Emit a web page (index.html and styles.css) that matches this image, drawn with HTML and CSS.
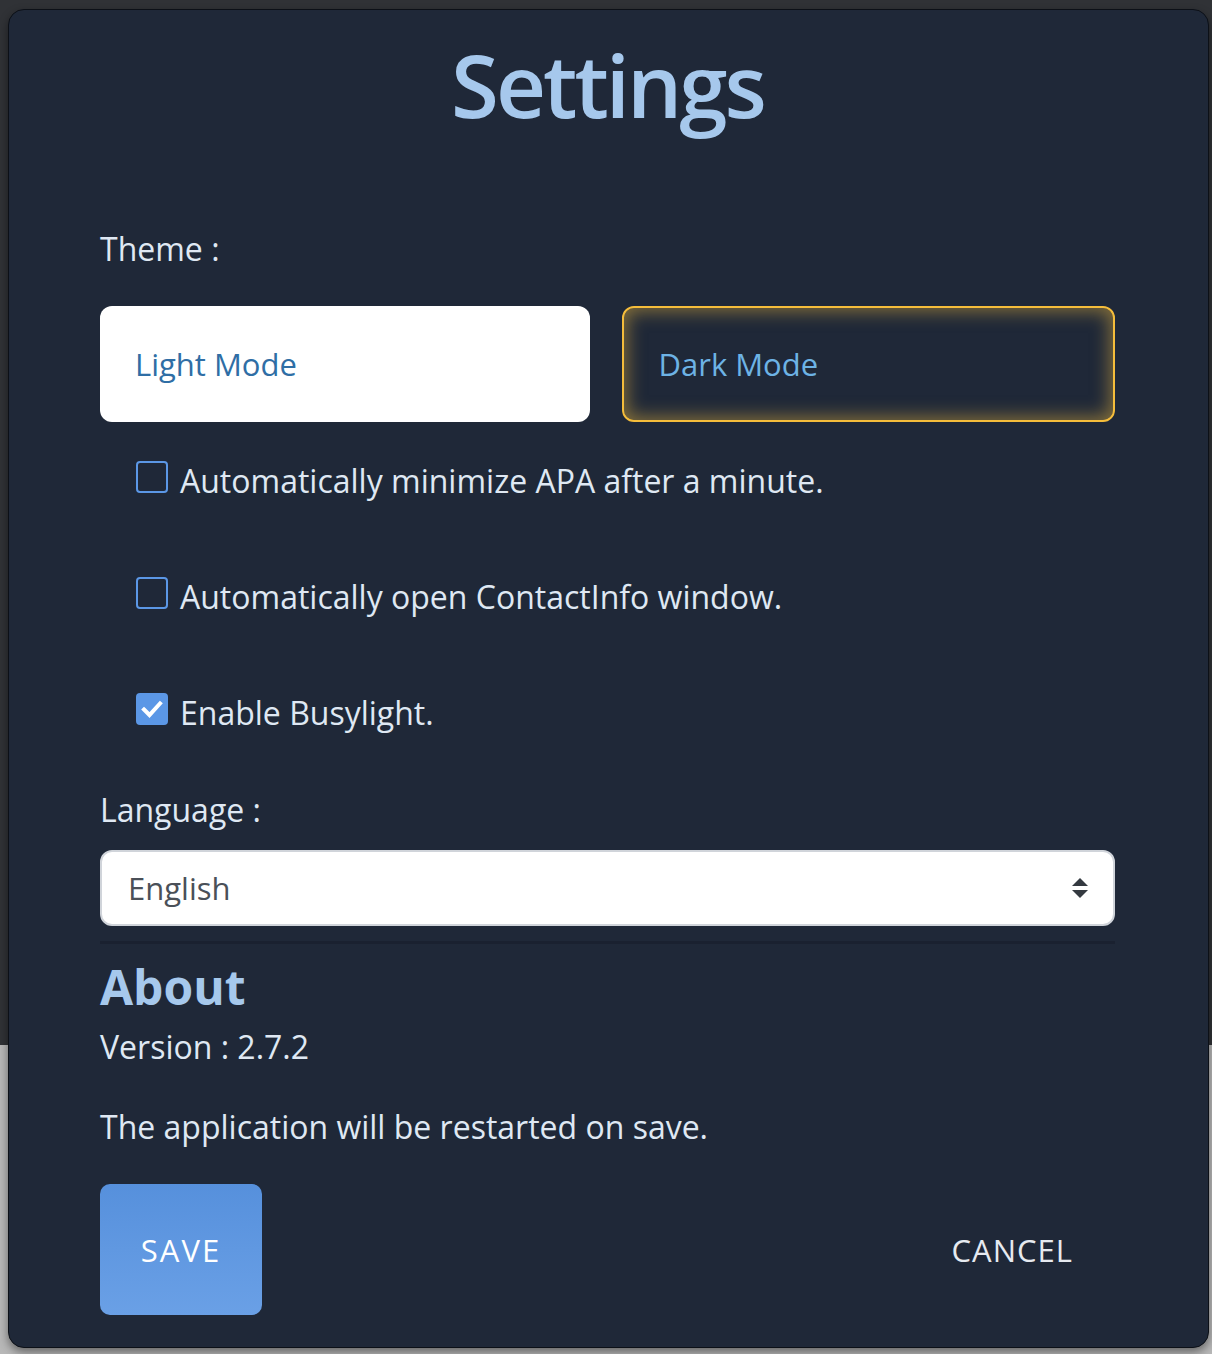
FILE: index.html
```html
<!DOCTYPE html>
<html lang="en">
  <head>
    <meta charset="UTF-8" />
    <meta name="viewport" content="width=device-width, initial-scale=1.0" />
    <title>Settings</title>
    <link rel="stylesheet" href="styles.css">
  </head>

  <body>
    <!-- Settings dialog -->
    <div class="dialog">
      <h1 class="title">Settings</h1>

      <p class="label theme-label">Theme :</p>
      <div class="themes">
        <button class="theme-btn light">Light Mode</button>
        <button class="theme-btn dark">Dark Mode</button>
      </div>

      <label class="check-row">
        <span class="box"></span>
        <span>Automatically minimize APA after a minute.</span>
      </label>
      <label class="check-row">
        <span class="box"></span>
        <span>Automatically open ContactInfo window.</span>
      </label>
      <label class="check-row">
        <span class="box checked">
          <svg width="32" height="32" viewBox="0 0 32 32">
            <path d="M8 16.5 L13.5 22 L24 10.5" fill="none" stroke="#fff" stroke-width="4" stroke-linecap="square" />
          </svg>
        </span>
        <span>Enable Busylight.</span>
      </label>

      <p class="label lang-label">Language :</p>
      <div class="select">
        <span>English</span>
        <svg width="16" height="20" viewBox="0 0 16 20">
          <path d="M8 0 L16 8 L0 8 Z" fill="#343a40" />
          <path d="M0 12 L16 12 L8 20 Z" fill="#343a40" />
        </svg>
      </div>

      <hr class="rule" />

      <h3 class="about">About</h3>
      <p class="text version">Version : 2.7.2</p>
      <p class="text restart">The application will be restarted on save.</p>

      <div class="actions">
        <button class="save">SAVE</button>
        <button class="cancel">CANCEL</button>
      </div>
    </div>
  </body>
</html>
```

FILE: styles.css
```css
html, body {
  margin: 0;
  padding: 0;
}
body {
  width: 1212px;
  height: 1354px;
  overflow: hidden;
  background: linear-gradient(#303236 0, #303236 1045px, #b8b8b8 1045px);
  font-family: "Open Sans", "Noto Sans", sans-serif;
}
.dialog {
  box-sizing: border-box;
  width: 1201px;
  height: 1339px;
  margin: 9px 0 0 8px;
  padding: 0 93px 0 91px;
  background: #1f2838;
  border: 1px solid #0c1017;
  border-radius: 16px;
  box-shadow: 0 4px 10px rgba(0, 0, 0, 0.45);
  overflow: hidden;
}
.title {
  margin: 26px 0 0;
  text-align: center;
  font-size: 87px;
  line-height: 96px;
  letter-spacing: -3px;
  font-weight: 600;
  color: #a6c8ec;
}
.label,
.text {
  margin: 0;
  font-size: 32px;
  line-height: 40px;
  color: #dfe8f3;
}
.theme-label {
  margin-top: 97px;
}
.themes {
  display: flex;
  gap: 32px;
  margin-top: 37px;
}
.theme-btn {
  flex: 1;
  height: 116px;
  box-sizing: border-box;
  padding: 0 0 0 35px;
  text-align: left;
  font-family: inherit;
  font-size: 31px;
  border-radius: 12px;
  cursor: pointer;
}
.theme-btn.light {
  background: #fff;
  border: none;
  color: #2f6ea5;
}
.theme-btn.dark {
  background: #1f2838;
  border: 2px solid #f5bd3b;
  color: #6db3e5;
  box-shadow: inset 0 0 18px 3px rgba(240, 185, 60, 0.5);
}
.check-row {
  display: flex;
  align-items: flex-start;
  gap: 12px;
  margin: 39px 0 0 36px;
  font-size: 32px;
  line-height: 40px;
  color: #dfe8f3;
}
.check-row + .check-row {
  margin-top: 76px;
}
.box {
  box-sizing: border-box;
  width: 32px;
  height: 32px;
  border: 2px solid #5b97e6;
  border-radius: 4px;
  flex-shrink: 0;
}
.box.checked {
  border: none;
  background: #5b97e6;
}
.box svg {
  display: block;
}
.lang-label {
  margin-top: 57px;
}
.select {
  box-sizing: border-box;
  height: 76px;
  margin-top: 20px;
  padding: 0 25px 0 26px;
  display: flex;
  align-items: center;
  justify-content: space-between;
  background: #fff;
  border: 2px solid #d0d4da;
  border-radius: 12px;
  font-size: 31px;
  color: #4a5058;
}
.rule {
  margin: 15px 0 0;
  border: none;
  height: 3px;
  background: #1a2130;
}
.about {
  margin: 13px 0 0;
  font-size: 48px;
  line-height: 60px;
  font-weight: 700;
  color: #a6c8ec;
}
.version {
  margin-top: 10px;
}
.restart {
  margin-top: 40px;
}
.actions {
  display: flex;
  justify-content: space-between;
  margin-top: 37px;
}
.save,
.cancel {
  height: 131px;
  font-family: inherit;
  font-size: 31px;
  letter-spacing: 2px;
  border: none;
  cursor: pointer;
}
.save {
  width: 162px;
  border-radius: 10px;
  background: linear-gradient(#5690dc, #6aa0e6);
  color: #fff;
}
.cancel {
  padding: 0 42px;
  letter-spacing: 1px;
  background: none;
  color: #e6eaf0;
}
```
